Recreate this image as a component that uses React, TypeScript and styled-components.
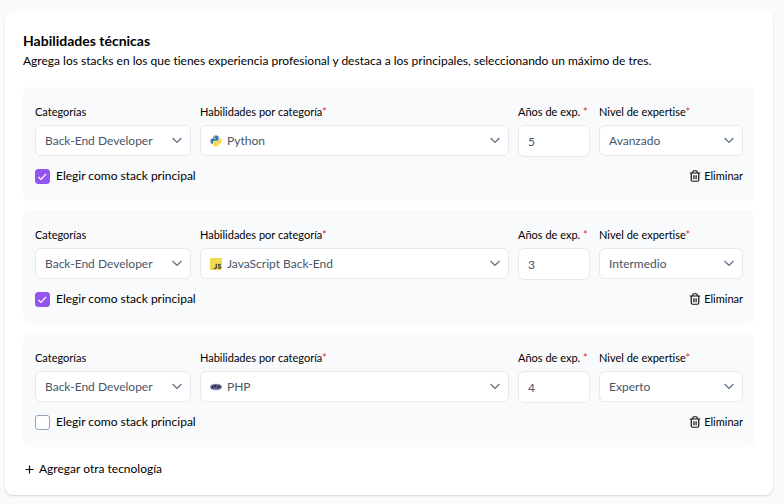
import React, { useId, useState } from "react";
import styled, { createGlobalStyle } from "styled-components";

const GlobalStyle = createGlobalStyle`
  *, *::before, *::after { box-sizing: border-box; }
  body {
    margin: 0;
    background: #f9fafc;
    color: #000;
    font-family: Lato, "Open Sans", sans-serif;
    font-size: 12px;
    line-height: 20px;
    font-variant-ligatures: none;
  }
  button, input, select { font: inherit; color: inherit; margin: 0; }
`;

const Page = styled.main`
  padding: 11px 11px 9px 5px;
`;

const Card = styled.section`
  padding: 20px 18px 16px;
  background: #fff;
  border-radius: 8px;
  box-shadow: 0 1px 2px rgba(15, 23, 42, 0.16);
`;

const Title = styled.h2`
  margin: 0;
  font-size: 14px;
  line-height: 20px;
  font-weight: 700;
`;

const Intro = styled.p`
  margin: 0 0 16px;
`;

const List = styled.div`
  display: flex;
  flex-direction: column;
  gap: 9px;
`;

const Panel = styled.article`
  padding: 15px 12px;
  background: #f9fafc;
  border-radius: 8px;
`;

const Fields = styled.div`
  display: grid;
  grid-template-columns: minmax(0, 156fr) minmax(0, 309fr) minmax(0, 72fr) minmax(0, 144fr);
  gap: 9px;
  align-items: start;
`;

const Field = styled.div`
  display: flex;
  flex-direction: column;
  gap: 3px;
`;

const Label = styled.label`
  font-size: 11px;
  line-height: 20px;
  white-space: nowrap;
`;

const Required = styled.span`
  color: #dc2640;
`;

const Control = styled.div`
  position: relative;
  display: flex;
`;

const Select = styled.select<{ $icon: boolean }>`
  width: 100%;
  height: 31px;
  padding: 0 24px 0 ${(p) => (p.$icon ? 26 : 9)}px;
  appearance: none;
  color: #475569;
  background: #fff;
  border: 1px solid #e7e9ed;
  border-radius: 6px;
`;

const Input = styled.input`
  width: 100%;
  height: 32px;
  padding: 0 9px;
  color: #475569;
  background: #fff;
  border: 1px solid #e7e9ed;
  border-radius: 6px;
`;

const Chevron = styled.svg`
  position: absolute;
  right: 8px;
  top: 9px;
  pointer-events: none;
`;

const LogoSlot = styled.span`
  position: absolute;
  left: 10px;
  top: 10px;
  display: flex;
  pointer-events: none;
`;

const Actions = styled.div`
  display: flex;
  justify-content: space-between;
  align-items: center;
  margin-top: 9px;
`;

const CheckLabel = styled.label`
  display: flex;
  align-items: center;
  gap: 6px;
`;

const Checkbox = styled.input`
  appearance: none;
  width: 15px;
  height: 15px;
  border: 1px solid #94a3b8;
  border-radius: 3px;
  background: #fff;

  &:checked {
    border-color: #9354f0;
    background: #9354f0;
  }
`;

const CheckBoxWrap = styled.span`
  position: relative;
  display: flex;
`;

const Tick = styled.svg`
  position: absolute;
  inset: 0;
  pointer-events: none;
`;

const TextButton = styled.button`
  display: flex;
  align-items: center;
  padding: 0;
  border: 0;
  background: none;
  cursor: pointer;
`;

const RemoveButton = styled(TextButton)`
  gap: 3px;
  font-size: 11px;
`;

const AddButton = styled(TextButton)`
  gap: 5px;
  margin: 12px 0 0 2px;
`;

function PythonLogo() {
  return (
    <svg width="12" height="12" viewBox="0 0 24 24" aria-hidden="true">
      <path fill="#3776ab" d="M11.9 1C6.300 1 6.700 3.400 6.700 3.400V6h5.300v.8H4.600S1 6.400 1 12s3.100 5.400 3.100 5.400H6v-2.600s-.1-3.100 3-3.100h5.300s2.900 0 2.900-2.800V4.100S17.700 1 11.900 1ZM9 2.700a1 1 0 1 1 0 1.900 1 1 0 0 1 0-1.900Z" />
      <path fill="#ffd43b" d="M12.100 23c5.600 0 5.200-2.400 5.200-2.400V18H12v-.8h7.400S23 17.600 23 12s-3.100-5.400-3.100-5.400H18v2.600s.1 3.100-3 3.100H9.700s-2.900 0-2.900 2.800v4.800S6.300 23 12.100 23Zm2.900-1.700a1 1 0 1 1 0-1.900 1 1 0 0 1 0 1.900Z" />
    </svg>
  );
}

function JsLogo() {
  return (
    <svg width="12" height="12" viewBox="0 0 24 24" aria-hidden="true">
      <path fill="#f0db4f" d="M0 0h24v24H0z" />
      <path
        fill="none"
        stroke="#323330"
        strokeWidth="2.200"
        d="M12.500 11.500v7.300c0 2.800-3.600 2.800-4.600.5M21.300 13.700c-1-1.900-4.700-1.700-4.700.5 0 2.500 4.900 1.700 4.900 4.300 0 2.500-4.400 2.500-5.600.1"
      />
    </svg>
  );
}

function PhpLogo() {
  return (
    <svg width="12" height="12" viewBox="0 0 24 24" aria-hidden="true">
      <ellipse cx="12" cy="12" rx="12" ry="6.300" fill="#777bb3" />
      <path
        fill="none"
        stroke="#15151c"
        strokeWidth="1.700"
        d="m4 15.500 1.300-6h2.400c2.600 0 2 4-.9 4H4.600M11.500 7.500l-1.300 6M11 10h2.200c1.200 0 1.200.6 1 1.500l-.4 2M15.600 15.500l1.300-6h2.400c2.600 0 2 4-.9 4h-2.200"
      />
    </svg>
  );
}

function TrashIcon() {
  return (
    <svg width="12" height="12" viewBox="0 0 24 24" fill="none" stroke="#111" strokeWidth="2.400" strokeLinejoin="round" aria-hidden="true">
      <path d="M1.500 6h21M4.500 6v13.500a3 3 0 0 0 3 3h9a3 3 0 0 0 3-3V6M7.500 6V4a2.500 2.500 0 0 1 2.500-2.500h4A2.500 2.500 0 0 1 16.500 4v2M9.800 10.500v8M14.200 10.500v8" />
    </svg>
  );
}

type Skill = {
  skill: string;
  Logo: () => React.JSX.Element;
  years: string;
  level: string;
  main: boolean;
};

const SKILLS: Skill[] = [
  { skill: "Python", Logo: PythonLogo, years: "5", level: "Avanzado", main: true },
  { skill: "JavaScript Back-End", Logo: JsLogo, years: "3", level: "Intermedio", main: true },
  { skill: "PHP", Logo: PhpLogo, years: "4", level: "Experto", main: false },
];

type SelectFieldProps = {
  label: string;
  value: string;
  required?: boolean;
  logo?: React.ReactNode;
};

function SelectField({ label, value, required, logo }: SelectFieldProps) {
  const id = useId();
  return (
    <Field>
      <Label htmlFor={id}>
        {label}
        {required && <Required>*</Required>}
      </Label>
      <Control>
        <Select id={id} $icon={Boolean(logo)} defaultValue={value}>
          <option>{value}</option>
        </Select>
        {logo && <LogoSlot>{logo}</LogoSlot>}
        <Chevron width="12" height="12" viewBox="0 0 12 12" fill="none" stroke="#64748b" strokeWidth="1.200" aria-hidden="true">
          <path d="m1.500 4 4.500 4.300L10.500 4" />
        </Chevron>
      </Control>
    </Field>
  );
}

function SkillPanel({ skill, Logo, years, level, main }: Skill) {
  const yearsId = useId();
  const mainId = useId();
  const [isMain, setIsMain] = useState(main);
  return (
    <Panel>
      <Fields>
        <SelectField label="Categorías" value="Back-End Developer" />
        <SelectField label="Habilidades por categoría" value={skill} required logo={<Logo />} />
        <Field>
          <Label htmlFor={yearsId}>
            Años de exp. <Required>*</Required>
          </Label>
          <Input id={yearsId} inputMode="numeric" defaultValue={years} />
        </Field>
        <SelectField label="Nivel de expertise" value={level} required />
      </Fields>
      <Actions>
        <CheckLabel htmlFor={mainId}>
          <CheckBoxWrap>
            <Checkbox id={mainId} type="checkbox" checked={isMain} onChange={(e) => setIsMain(e.target.checked)} />
            {isMain && (
              <Tick width="15" height="15" viewBox="0 0 15 15" fill="none" stroke="#fff" strokeWidth="1.200" aria-hidden="true">
                <path d="m3.500 8 2.500 2.500 5-5.500" />
              </Tick>
            )}
          </CheckBoxWrap>
          Elegir como stack principal
        </CheckLabel>
        <RemoveButton type="button">
          <TrashIcon />
          Eliminar
        </RemoveButton>
      </Actions>
    </Panel>
  );
}

export default function App() {
  return (
    <>
      <GlobalStyle />
      <Page>
        <Card>
          <Title>Habilidades técnicas</Title>
          <Intro>
            Agrega los stacks en los que tienes experiencia profesional y destaca a los principales, seleccionando un máximo de tres.
          </Intro>
          <List>
            {SKILLS.map((s) => (
              <SkillPanel key={s.skill} {...s} />
            ))}
          </List>
          <AddButton type="button">
            <svg width="9" height="9" viewBox="0 0 9 9" stroke="#111" strokeWidth="1.200" aria-hidden="true">
              <path d="M4.500 0.500v8M0.500 4.500h8" />
            </svg>
            Agregar otra tecnología
          </AddButton>
        </Card>
      </Page>
    </>
  );
}
